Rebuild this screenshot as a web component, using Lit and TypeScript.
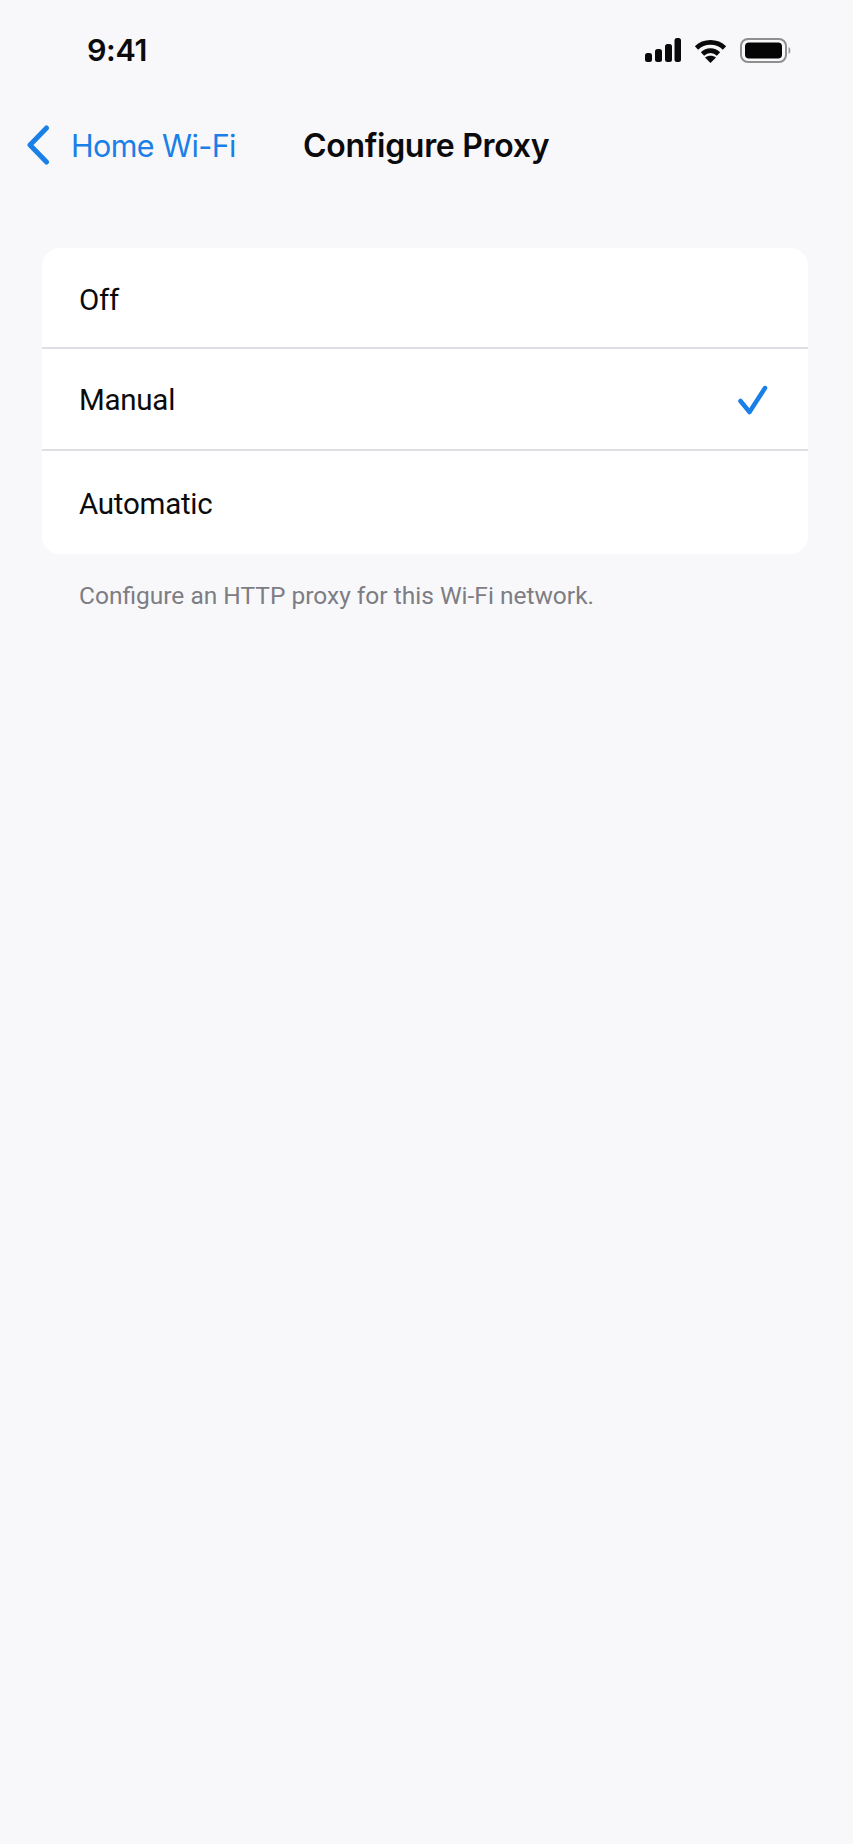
import { LitElement, html, css } from "lit";
import { customElement } from "lit/decorators.js";

@customElement("app-root")
export class AppRoot extends LitElement {
  static styles = css`
    :host { display: block; width: 853px; height: 1844px; background: #f8f8fb; font-family: Inter, "Liberation Sans", sans-serif; color: #0b0b0c; overflow: hidden; }
    .status { height: 100px; box-sizing: border-box; padding: 32px 0 0 87px; display: flex; align-items: flex-start; justify-content: space-between; }
    .time { font-size: 30.5px; line-height: 36px; font-weight: 600; letter-spacing: -0.4px; }
    .icons { display: flex; align-items: center; gap: 13px; padding: 6px 61px 0 0; }
    .icons svg { display: block; }
    .nav { height: 60px; padding-top: 15px; display: flex; align-items: center; }
    .chev { margin-left: 26px; display: block; }
    .back { margin-left: 19px; width: 232px; font-size: 30.5px; letter-spacing: -0.6px; color: #1a7fe6; white-space: nowrap; }
    .title { font-size: 32px; font-weight: 600; letter-spacing: -0.3px; white-space: nowrap; }
    .card { margin: 73px 45px 0 42px; background: #fff; border-radius: 18px; overflow: hidden; }
    .row { height: 102px; box-sizing: border-box; padding: 2px 40px 0 37px; display: flex; align-items: center; justify-content: space-between; font-family: Roboto, sans-serif; font-size: 29.5px; letter-spacing: -0.25px; border-bottom: 2px solid #dfdfe3; }
    .row:first-child { height: 101px; padding-top: 4px; }
    .row:last-child { border-bottom: 0; height: 103px; }
    .foot { margin: 27px 0 0 79px; font-family: Roboto, sans-serif; font-size: 24.5px; line-height: 30px; color: #7d7d83; letter-spacing: 0; white-space: nowrap; }
  `;

  render() {
    return html`
      <div class="status">
        <div class="time">9:41</div>
        <div class="icons">
          <svg width="37" height="26" viewBox="0 0 37 26" fill="#0a0a0a">
            <rect x="1" y="15" width="7" height="9" rx="2.5"/>
            <rect x="11" y="11" width="7" height="13" rx="2.5"/>
            <rect x="21" y="6" width="7" height="18" rx="2.5"/>
            <rect x="30.5" y="0" width="6.5" height="24" rx="2.5"/>
          </svg>
          <svg width="33" height="26" viewBox="0 0 33 26" fill="none" stroke="#0a0a0a" stroke-width="4.6">
            <path d="M2.5 10 C 10 2.5, 23 2.5, 30.5 10"/>
            <path d="M8.5 16 C 13 11.5, 20 11.5, 24.500 16"/>
            <path d="M16.500 25 L11 19.500 C 14 17, 19 17, 22 19.500 Z" fill="#0a0a0a" stroke="none"/>
          </svg>
          <svg width="52" height="26" viewBox="0 0 52 26">
            <rect x="1" y="1" width="45" height="23" rx="7" fill="none" stroke="#8f8f8f" stroke-width="2"/>
            <rect x="5" y="4.500" width="37" height="16" rx="4" fill="#050505"/>
            <path d="M48.500 9 C 51 9.500, 51 15.500, 48.500 16 Z" fill="#9a9a9a"/>
          </svg>
        </div>
      </div>
      <div class="nav">
        <svg class="chev" width="26" height="40" viewBox="0 0 26 40" fill="none" stroke="#1a7fe6" stroke-width="5" stroke-linecap="round" stroke-linejoin="round">
          <path d="M20.500 3 L4 20 L20.500 37"/>
        </svg>
        <div class="back">Home Wi-Fi</div>
        <div class="title">Configure Proxy</div>
      </div>
      <div class="card">
        <div class="row">Off</div>
        <div class="row">Manual
          <svg width="32" height="32" viewBox="0 0 32 32" fill="none" stroke="#1a7fe6" stroke-width="4.500" stroke-linecap="round" stroke-linejoin="round">
            <path d="M4.500 17 L13.500 28 L29 4"/>
          </svg>
        </div>
        <div class="row">Automatic</div>
      </div>
      <div class="foot">Configure an HTTP proxy for this Wi-Fi network.</div>
    `;
  }
}
